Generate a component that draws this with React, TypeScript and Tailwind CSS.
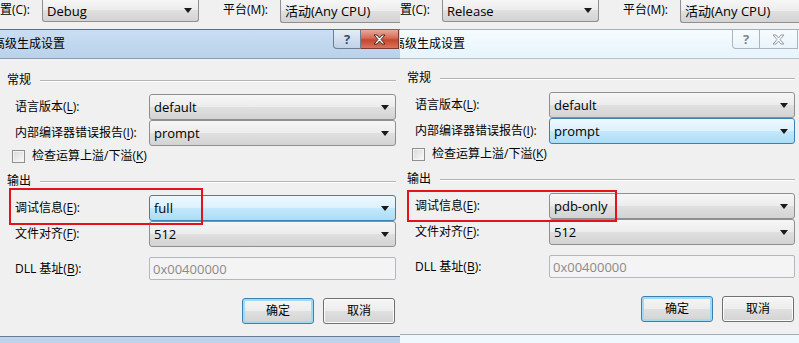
import React from 'react';

type PanelProps = {
  config: string;
  active: boolean;
  debugValue: string;
  focusPrompt: boolean;
  firstGap: string;
  redBox: string;
};

const plainFill =
  'border-[#8e8f8f] bg-[linear-gradient(to_bottom,#f6f6f6_0%,#ececec_50%,#e0e0e0_50%,#d3d3d3_100%)]';
const focusFill =
  'border-[#3c7fb1] bg-[linear-gradient(to_bottom,#eef8fd_0%,#dcf1fc_50%,#c4e8fc_50%,#addcf6_100%)]';

const Arrow = () => (
  <svg width="8" height="5" viewBox="0 0 8 5" className="shrink-0">
    <path d="M0 0h8L4 5z" fill="#1a1a1a" />
  </svg>
);

const Combo: React.FC<{ value: string; focused?: boolean }> = ({ value, focused }) => (
  <div
    className={`flex h-[26px] flex-1 items-center justify-between rounded-[3px] border pl-[4px] pr-[6px] text-[13px] leading-[18px] text-black ${
      focused ? focusFill : plainFill
    }`}
  >
    <span>{value}</span>
    <Arrow />
  </div>
);

const Label: React.FC<{ text: string; k: string }> = ({ text, k }) => (
  <div className="w-[134px] shrink-0 text-[12px] leading-[16px] text-black">
    {text}(<u className="underline-offset-2">{k}</u>):
  </div>
);

const Section: React.FC<{ title: string; className?: string }> = ({ title, className = '' }) => (
  <div className={`flex h-[20px] items-center pl-[7px] pr-[4px] ${className}`}>
    <span className="text-[12px] leading-[16px] text-black">{title}</span>
    <div className="ml-[9px] mt-[2px] h-[2px] flex-1 border-t border-b border-t-[#b4b4b4] border-b-white" />
  </div>
);

const Panel: React.FC<PanelProps> = ({ config, active, debugValue, focusPrompt, firstGap, redBox }) => (
  <div className="relative flex h-[343px] flex-col overflow-hidden bg-[#f0f0f0]">
    {/* strip of the VS window behind the dialog */}
    <div className="flex h-[29px] shrink-0 items-start bg-[#f0f0f0]">
      <div className="w-[42px] pt-[2px] text-[12px] leading-[16px] text-black">置(C):</div>
      <div className={`flex h-[22px] w-[157px] items-center justify-between rounded-b-[3px] border border-t-0 pl-[4px] pr-[6px] text-[13px] leading-[18px] ${plainFill}`}>
        <span>{config}</span>
        <Arrow />
      </div>
      <div className="ml-[24px] w-[57px] pt-[2px] text-[12px] leading-[16px] text-black">
        平台(M):
      </div>
      <div className={`flex h-[23px] flex-1 items-center rounded-bl-[3px] border border-t-0 border-r-0 pl-[4px] text-[13px] leading-[18px] ${plainFill}`}>
        活动(Any CPU)
      </div>
    </div>

    {/* title bar */}
    <div
      className={`flex h-[30px] shrink-0 border-t border-b ${
        active
          ? 'border-t-[#5d6f87] border-b-[#8b9cb1] bg-[linear-gradient(to_bottom,#cadef3,#b9d1ea)]'
          : 'border-t-[#a3aebb] border-b-[#b9c0c7] bg-[linear-gradient(to_bottom,#f6fcfe,#e6f4fb)]'
      }`}
    >
      <div className="-ml-[7px] flex-1 pt-[6px] text-[12px] leading-[16px] text-black">高级生成设置</div>
      <div className="flex items-start pr-[1px]">
        <div
          className={`flex h-[19px] w-[28px] items-center justify-center rounded-bl-[4px] border border-t-0 text-[13px] font-bold leading-none ${
            active
              ? 'border-[#6c7e95] bg-[linear-gradient(to_bottom,#e4edf7,#c0d2e6)] text-[#3b4b60]'
              : 'border-[#aab5c2] bg-[linear-gradient(to_bottom,#f7fcfe,#e9f4fa)] text-[#7c8896]'
          }`}
        >
          ?
        </div>
        <div
          className={`flex h-[19px] w-[38px] items-center justify-center border border-t-0 border-l-0 ${
            active
              ? 'border-[#7a3a30] bg-[linear-gradient(to_bottom,#e9a99b_0%,#d66a55_45%,#c7452d_55%,#d9745c_100%)]'
              : 'border-[#aab5c2] bg-[linear-gradient(to_bottom,#f7fcfe,#e9f4fa)]'
          }`}
        >
          <svg width="13" height="11" viewBox="0 0 13 11">
            <path
              d="M1 1h3l2.5 3L9 1h3L8 5.5 12 10H9L6.5 7 4 10H1l4-4.5z"
              fill="#ffffff"
              stroke={active ? '#3d2a27' : '#8e9aa8'}
              strokeWidth="1"
              strokeLinejoin="round"
            />
          </svg>
        </div>
      </div>
    </div>

    {/* dialog body */}
    <Section title="常规" className={firstGap} />
    <div className="mt-[4px] flex items-center pl-[15px] pr-[4px]">
      <Label text="语言版本" k="L" />
      <Combo value="default" />
    </div>
    <div className="flex items-center pl-[15px] pr-[4px]">
      <Label text="内部编译器错误报告" k="I" />
      <Combo value="prompt" focused={focusPrompt} />
    </div>
    <div className="flex h-[20px] items-center pl-[12px]">
      <div className="h-[13px] w-[13px] border border-[#8f8f8f] bg-[linear-gradient(135deg,#d8d8d8,#fbfbfb)] shadow-[inset_0_0_0_1px_#f4f4f4]" />
      <span className="ml-[7px] text-[12px] leading-[16px] text-black">
        检查运算上溢/下溢(<u className="underline-offset-2">K</u>)
      </span>
    </div>
    <Section title="输出" className="mt-[5px]" />
    <div className="mt-[4px] flex items-center pl-[15px] pr-[4px]">
      <Label text="调试信息" k="E" />
      <Combo value={debugValue} focused={!focusPrompt} />
    </div>
    <div className="flex items-center pl-[15px] pr-[4px]">
      <Label text="文件对齐" k="F" />
      <Combo value="512" />
    </div>
    <div className="mt-[10px] flex items-center pl-[15px] pr-[4px]">
      <div className="w-[134px] shrink-0 text-[12px] leading-[16px] text-black">
        DLL 基址(<u className="underline-offset-2">B</u>):
      </div>
      <div className="flex h-[23px] flex-1 items-center rounded-[2px] border border-[#b5b8bb] bg-[#f4f4f4] pl-[3px] text-[13px] leading-[18px] text-[#8a8a8a]">
        0x00400000
      </div>
    </div>
    <div className="mt-[18px] flex justify-end gap-[9px] pr-[5px]">
      <div className="flex h-[26px] w-[72px] items-center justify-center rounded-[3px] border border-[#3c7fb1] bg-[linear-gradient(to_bottom,#f6f6f6_0%,#ececec_50%,#e0e0e0_50%,#d3d3d3_100%)] text-[12px] text-black shadow-[inset_0_0_0_2px_#9fdaf7]">
        确定
      </div>
      <div className="flex h-[26px] w-[72px] items-center justify-center rounded-[3px] border border-[#707070] bg-[linear-gradient(to_bottom,#f6f6f6_0%,#ececec_50%,#e0e0e0_50%,#d3d3d3_100%)] text-[12px] text-black shadow-[inset_0_0_0_1px_#fbfbfb]">
        取消
      </div>
    </div>
    <div
      className={`mt-[12px] flex-1 border-t ${
        active ? 'border-[#6a7b92] bg-[#bdd3eb]' : 'border-[#a2acb6] bg-[#eef8fd]'
      }`}
    />

    {/* red annotation frame */}
    <div className={`absolute border-2 border-[#e3121b] ${redBox}`} />
  </div>
);

export default function App() {
  return (
    <div className="flex h-[343px] w-[799px] overflow-hidden font-['Open_Sans','Noto_Sans_CJK_SC',sans-serif]">
      <div className="w-[400px] shrink-0">
        <Panel
          config="Debug"
          active
          debugValue="full"
          focusPrompt={false}
          firstGap="mt-[11px]"
          redBox="left-[9px] top-[188px] h-[37px] w-[194px]"
        />
      </div>
      <div className="w-[399px] shrink-0">
        <Panel
          config="Release"
          active={false}
          debugValue="pdb-only"
          focusPrompt
          firstGap="mt-[9px]"
          redBox="left-[7px] top-[190px] h-[32px] w-[210px]"
        />
      </div>
    </div>
  );
}
